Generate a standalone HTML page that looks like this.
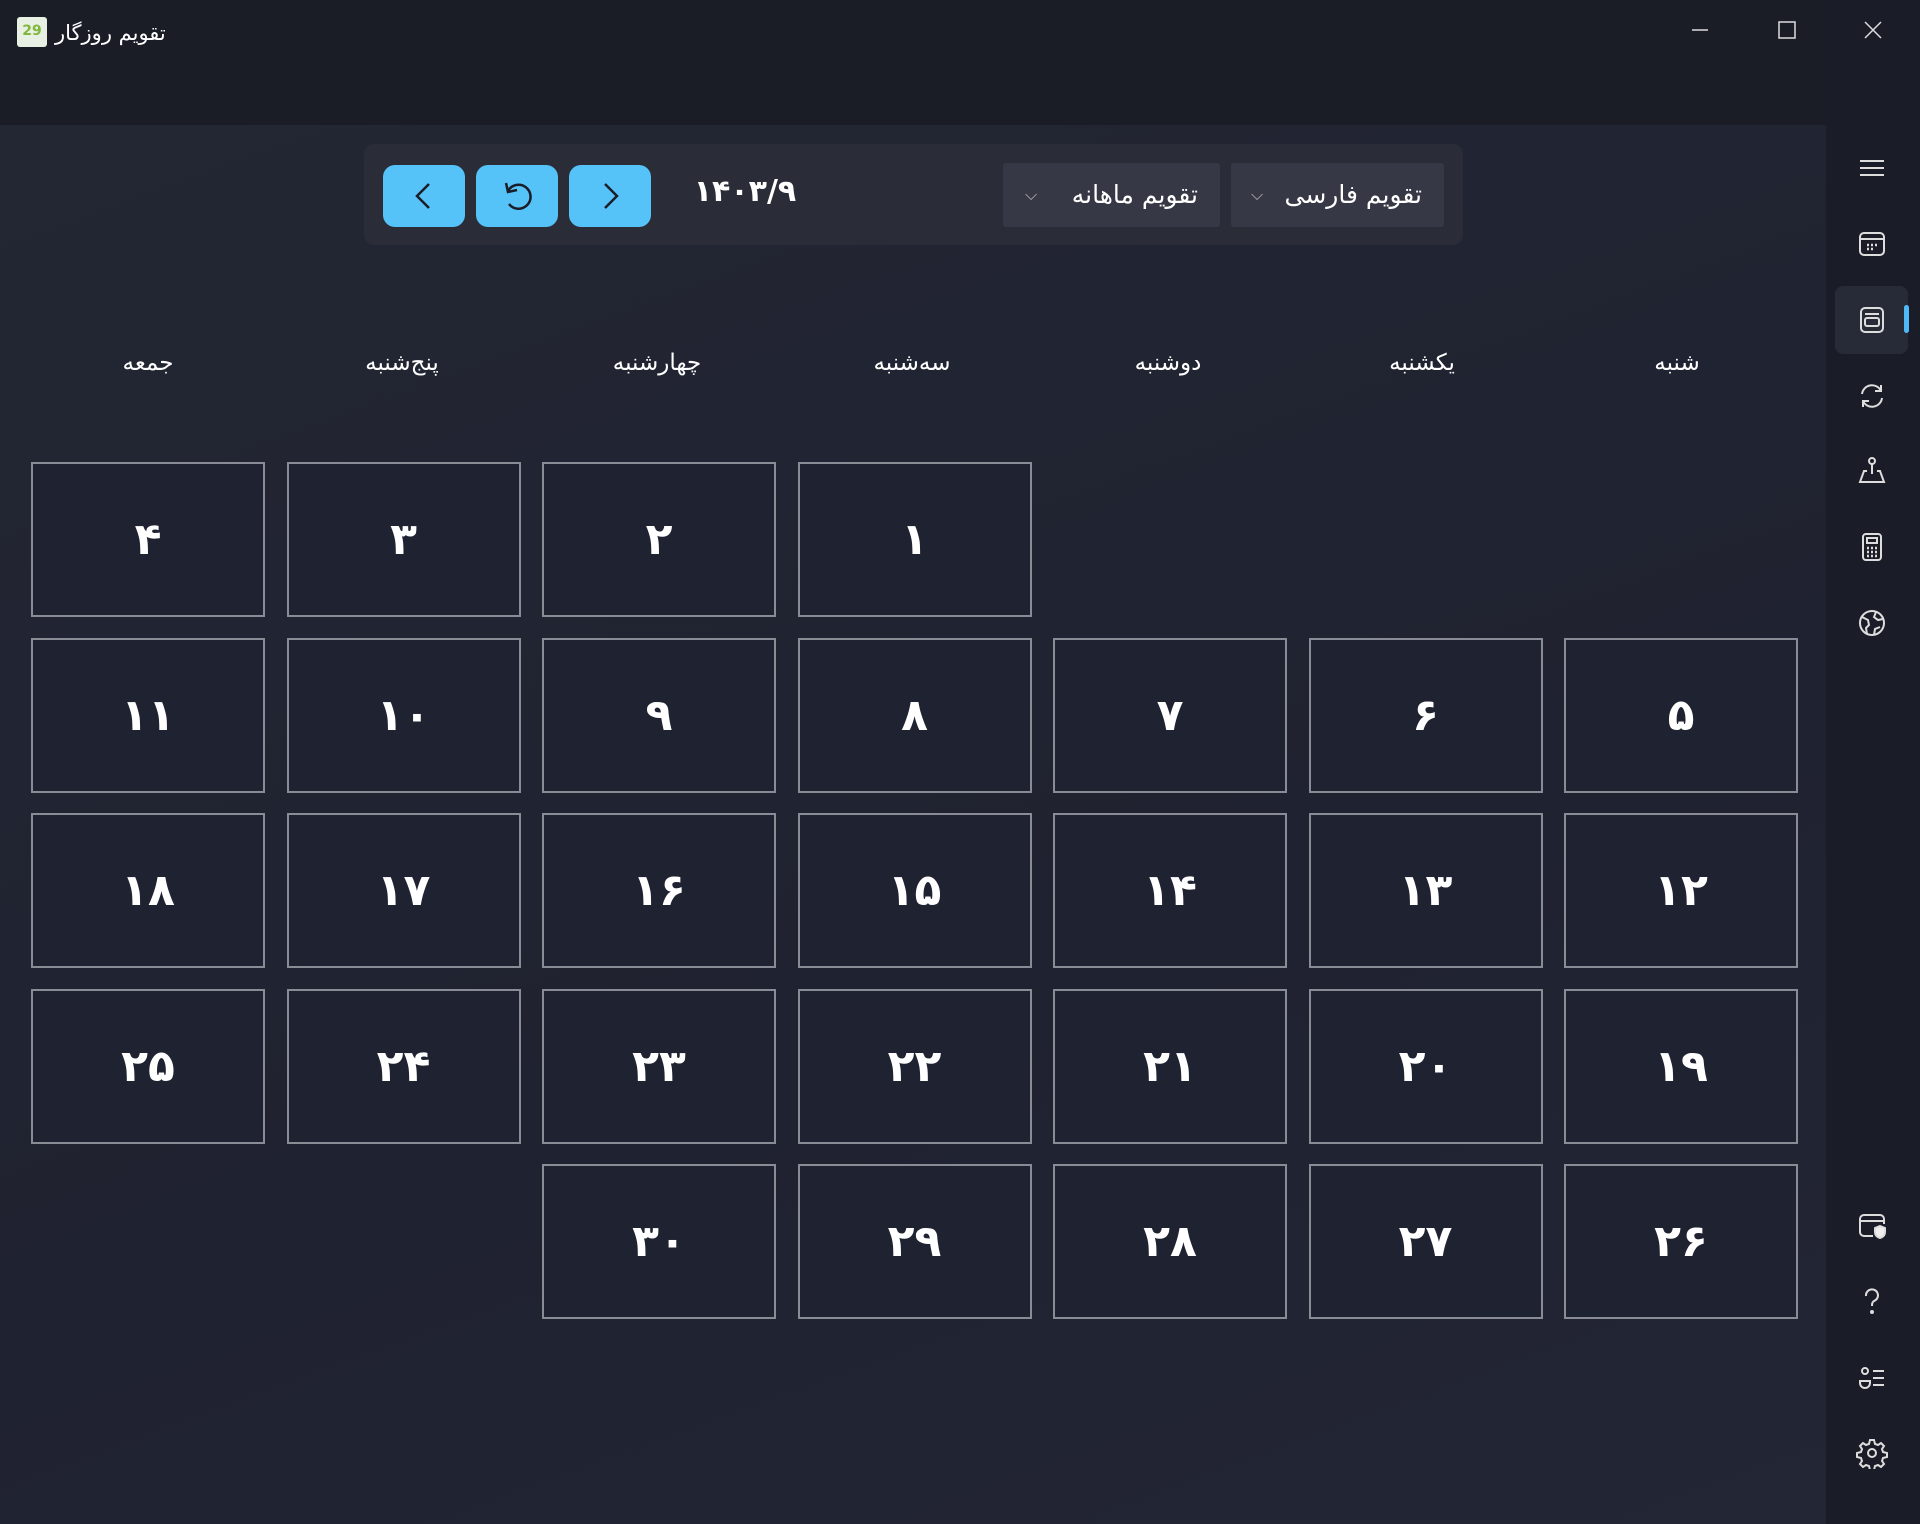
<!DOCTYPE html>
<html><head><meta charset="utf-8"><style>
*{margin:0;padding:0;box-sizing:border-box}
body{width:1920px;height:1524px;background:#1b1d27;font-family:"DejaVu Sans","Liberation Sans",sans-serif;color:#fff;position:relative;overflow:hidden}
.title{position:absolute;left:0;top:0;width:1920px;height:125px;background:#1a1c26}
.main{position:absolute;left:0;top:125px;width:1826px;height:1399px;background:linear-gradient(160deg,#232633,#1f2230 60%,#232635)}
.side{position:absolute;left:1826px;top:0;width:94px;height:1524px;background:#1a1c27}
.tb{position:absolute;left:364px;top:144px;width:1099px;height:101px;background:#2a2d38;border-radius:10px}
.btn{position:absolute;top:165px;width:82px;height:62px;background:#55c3f7;border-radius:12px}
.dd{position:absolute;top:163px;height:64px;background:#363945;border-radius:3px;font-size:25px;line-height:64px;direction:rtl}
.hdr{position:absolute;top:350px;font-size:23px;width:234px;text-align:center;direction:rtl}
.grid{position:absolute;left:34px;top:462px;width:1764px;display:grid;grid-template-columns:repeat(7,234px);column-gap:21.5px;grid-template-rows:repeat(5,155px);row-gap:20.5px;direction:rtl}
.c{border:2px solid #8a8c95;font-size:44px;font-weight:bold;display:flex;align-items:center;justify-content:center;background:#1f2230}
.ic{position:absolute;left:1856px;width:32px;height:32px}
svg{display:block}
</style></head><body>
<div class="title"></div>
<div class="main"></div>
<div class="side"></div>
<div style="position:absolute;left:17px;top:17px;width:30px;height:30px;background:#e8efe3;border-radius:3px;color:#7fb83a;font-size:14px;font-weight:bold;text-align:center;line-height:28px">29</div>
<div style="position:absolute;left:55px;top:21px;font-size:21px;direction:rtl">تقویم روزگار</div>
<svg style="position:absolute;left:1690px;top:20px" width="20" height="20"><path d="M2 10h16" stroke="#ddd" stroke-width="1.5"/></svg>
<svg style="position:absolute;left:1777px;top:20px" width="20" height="20"><rect x="2" y="2" width="16" height="16" fill="none" stroke="#ddd" stroke-width="1.5"/></svg>
<svg style="position:absolute;left:1863px;top:20px" width="20" height="20"><path d="M2 2L18 18M18 2L2 18" stroke="#ddd" stroke-width="1.5"/></svg>
<div class="tb"></div>
<div class="btn" style="left:383px"><svg width="82" height="62"><path d="M46 19L34 31L46 43" fill="none" stroke="#1a1d28" stroke-width="2.5"/></svg></div>
<div class="btn" style="left:476px"><svg width="82" height="62"><path d="M32 26A12 12 0 1 1 33 39" fill="none" stroke="#1a1d28" stroke-width="2.5"/><path d="M30 18L32 27L41 25" fill="none" stroke="#1a1d28" stroke-width="2.5"/></svg></div>
<div class="btn" style="left:569px"><svg width="82" height="62"><path d="M36 19L48 31L36 43" fill="none" stroke="#1a1d28" stroke-width="2.5"/></svg></div>
<div style="position:absolute;left:690px;top:174px;width:110px;font-size:30px;font-weight:bold;direction:rtl;text-align:center">۱۴۰۳/۹</div>
<div class="dd" style="left:1003px;width:217px;padding-right:22px">تقویم ماهانه<span style="position:absolute;left:22px;top:0;font-size:16px;color:#bbb">⌵</span></div>
<div class="dd" style="left:1231px;width:213px;padding-right:22px">تقویم فارسی<span style="position:absolute;left:20px;top:0;font-size:16px;color:#bbb">⌵</span></div>
<div class="hdr" style="left:1560px">شنبه</div>
<div class="hdr" style="left:1305px">یکشنبه</div>
<div class="hdr" style="left:1051px">دوشنبه</div>
<div class="hdr" style="left:795px">سه‌شنبه</div>
<div class="hdr" style="left:540px">چهارشنبه</div>
<div class="hdr" style="left:285px">پنج‌شنبه</div>
<div class="hdr" style="left:31px">جمعه</div>
<div class="grid">
<div class="c" style="grid-column:4">۱</div><div class="c">۲</div><div class="c">۳</div><div class="c">۴</div>
<div class="c">۵</div><div class="c">۶</div><div class="c">۷</div><div class="c">۸</div><div class="c">۹</div><div class="c">۱۰</div><div class="c">۱۱</div>
<div class="c">۱۲</div><div class="c">۱۳</div><div class="c">۱۴</div><div class="c">۱۵</div><div class="c">۱۶</div><div class="c">۱۷</div><div class="c">۱۸</div>
<div class="c">۱۹</div><div class="c">۲۰</div><div class="c">۲۱</div><div class="c">۲۲</div><div class="c">۲۳</div><div class="c">۲۴</div><div class="c">۲۵</div>
<div class="c">۲۶</div><div class="c">۲۷</div><div class="c">۲۸</div><div class="c">۲۹</div><div class="c">۳۰</div>
</div>
<div style="position:absolute;left:1835px;top:286px;width:73px;height:68px;background:#272a37;border-radius:8px"></div>
<div style="position:absolute;left:1904px;top:305px;width:5px;height:28px;background:#4fb8f5;border-radius:3px"></div>
<svg class="ic" style="top:152px" viewBox="0 0 32 32"><path d="M4 9h24M4 16h24M4 23h24" stroke="#ddd" stroke-width="2"/></svg>
<svg class="ic" style="top:228px" viewBox="0 0 32 32" fill="none" stroke="#ddd" stroke-width="2"><rect x="4" y="5" width="24" height="22" rx="4"/><path d="M4 11h24"/><path d="M11 17h2M15 17h2M19 17h2M11 21h2M15 21h2" stroke-width="2.5"/></svg>
<svg class="ic" style="top:304px" viewBox="0 0 32 32" fill="none" stroke="#ddd" stroke-width="2"><rect x="5" y="4" width="22" height="24" rx="4"/><rect x="9" y="14" width="14" height="8" rx="2"/><path d="M9 10h14"/></svg>
<svg class="ic" style="top:380px" viewBox="0 0 32 32" fill="none" stroke="#ddd" stroke-width="2"><path d="M6 14A10 10 0 0 1 25 11M25 5v6h-6M26 18A10 10 0 0 1 7 21M7 27v-6h6"/></svg>
<svg class="ic" style="top:455px" viewBox="0 0 32 32" fill="none" stroke="#ddd" stroke-width="2"><circle cx="16" cy="6" r="3"/><path d="M16 9v10M11 16H8L4 27h24l-4-11h-3"/></svg>
<svg class="ic" style="top:531px" viewBox="0 0 32 32" fill="none" stroke="#ddd" stroke-width="2"><rect x="7" y="3" width="18" height="26" rx="3"/><rect x="11" y="7" width="10" height="5"/><path d="M11 17h2M15 17h2M19 17h2M11 21h2M15 21h2M19 21h2M11 25h2M15 25h2M19 25h2" stroke-width="2.5"/></svg>
<svg class="ic" style="top:607px" viewBox="0 0 32 32" fill="none" stroke="#ddd" stroke-width="2"><circle cx="16" cy="16" r="12"/><path d="M6 10l6 3 1 5 -3 3 1 6M20 5l-2 5 4 3 5-1M18 28l1-6 5-2"/></svg>
<svg class="ic" style="top:1210px" viewBox="0 0 32 32" fill="none" stroke="#ddd" stroke-width="2"><path d="M17 26H8a4 4 0 0 1-4-4V9a4 4 0 0 1 4-4h16a4 4 0 0 1 4 4v5M4 11h24"/><path d="M24 16l5 2v4c0 3-2 5-5 6-3-1-5-3-5-6v-4z" fill="#eee"/></svg>
<svg class="ic" style="top:1286px" viewBox="0 0 32 32" fill="none" stroke="#ddd" stroke-width="2"><path d="M10 10a6 6 0 1 1 8 5c-2 1-2 3-2 5"/><circle cx="16" cy="26" r="1" fill="#ddd"/></svg>
<svg class="ic" style="top:1362px" viewBox="0 0 32 32" fill="none" stroke="#ddd" stroke-width="2"><circle cx="9" cy="9" r="3"/><path d="M4 19h10v2a5 5 0 0 1-10 0zM17 9h11M17 16h11M17 23h11"/></svg>
<svg class="ic" style="top:1437px" viewBox="0 0 32 32" fill="none" stroke="#ddd" stroke-width="2"><circle cx="16" cy="16" r="4"/><path d="M14 3h4l1 4 3 1 3-2 3 3-2 3 1 3 4 1v4l-4 1-1 3 2 3-3 3-3-2-3 1-1 4h-4l-1-4-3-1-3 2-3-3 2-3-1-3-4-1v-4l4-1 1-3-2-3 3-3 3 2 3-1z"/></svg>
</body></html>
